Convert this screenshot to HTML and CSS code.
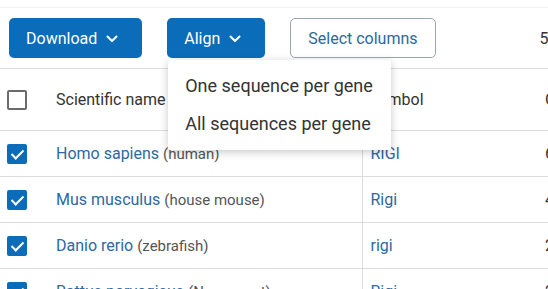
FILE: index.html
```html
<!DOCTYPE html>
<html lang="en">
<head>
  <meta charset="UTF-8" />
  <meta name="viewport" content="width=device-width, initial-scale=1" />
  <title>Orthologs</title>
  <link rel="stylesheet" href="styles.css">
</head>
<body>
  <div class="page">
    <div class="toolbar">
      <button class="btn btn-primary">Download
        <svg class="chev" width="12" height="8" viewBox="0 0 12 8"><path d="M1.5 1.5 6 6l4.5-4.5" fill="none" stroke="#fff" stroke-width="2" stroke-linecap="round" stroke-linejoin="round"/></svg>
      </button>
      <div class="dropdown">
        <button class="btn btn-primary">Align
          <svg class="chev" width="12" height="8" viewBox="0 0 12 8"><path d="M1.5 1.5 6 6l4.5-4.5" fill="none" stroke="#fff" stroke-width="2" stroke-linecap="round" stroke-linejoin="round"/></svg>
        </button>
        <div class="menu">
          <div class="menu-item">One sequence per gene</div>
          <div class="menu-item">All sequences per gene</div>
        </div>
      </div>
      <button class="btn btn-outline">Select columns</button>
      <span class="count">5 selected</span>
    </div>

    <table class="genes">
      <thead>
        <tr>
          <th class="col-check"><span class="checkbox"></span></th>
          <th class="col-name">Scientific name</th>
          <th class="col-symbol">Symbol</th>
          <th class="col-more">Gene ID</th>
        </tr>
      </thead>
      <tbody>
        <tr>
          <td class="col-check"><span class="checkbox checked"></span></td>
          <td class="col-name"><a href="#">Homo sapiens</a> <span class="common">(human)</span></td>
          <td class="col-symbol"><a href="#">RIGI</a></td>
          <td class="col-more">6</td>
        </tr>
        <tr>
          <td class="col-check"><span class="checkbox checked"></span></td>
          <td class="col-name"><a href="#">Mus musculus</a> <span class="common">(house mouse)</span></td>
          <td class="col-symbol"><a href="#">Rigi</a></td>
          <td class="col-more">4</td>
        </tr>
        <tr>
          <td class="col-check"><span class="checkbox checked"></span></td>
          <td class="col-name"><a href="#">Danio rerio</a> <span class="common">(zebrafish)</span></td>
          <td class="col-symbol"><a href="#">rigi</a></td>
          <td class="col-more">2</td>
        </tr>
        <tr>
          <td class="col-check"><span class="checkbox checked"></span></td>
          <td class="col-name"><a href="#">Rattus norvegicus</a> <span class="common">(Norway rat)</span></td>
          <td class="col-symbol"><a href="#">Rigi</a></td>
          <td class="col-more">2</td>
        </tr>
      </tbody>
    </table>
  </div>
</body>
</html>
```

FILE: styles.css
```css
* {
  margin: 0;
  padding: 0;
  box-sizing: border-box;
}

body {
  font-family: Roboto, "Liberation Sans", sans-serif;
  background-color: #fff;
  color: #333;
  width: 548px;
  height: 289px;
  overflow: hidden;
}

.page {
  width: 760px;
  border-top: 1px solid #f1f1f1;
  margin-top: 7px;
}

.toolbar {
  display: flex;
  align-items: center;
  height: 60px;
  padding: 0 0 0 9px;
}

.btn {
  height: 40px;
  border-radius: 5px;
  font-family: inherit;
  font-size: 16px;
  cursor: pointer;
  display: flex;
  align-items: center;
}

.btn-primary {
  background-color: #0b6db9;
  color: #fff;
  border: none;
  padding: 0 24px 0 17px;
  gap: 9px;
}

.btn-primary + .dropdown,
.dropdown + .btn {
  margin-left: 25px;
}

.chev {
  margin-top: 1px;
}

.btn-outline {
  background-color: #fff;
  color: #2b68a0;
  border: 1px solid #98a6b3;
  padding: 0 17px;
}

.dropdown {
  position: relative;
}

.menu {
  position: absolute;
  left: 1px;
  top: 42px;
  width: 223px;
  background-color: #fff;
  box-shadow: 0 2px 8px rgba(0, 0, 0, 0.22);
  border-radius: 2px;
  padding: 7px 0;
  z-index: 2;
}

.menu-item {
  padding: 0 17px;
  height: 38px;
  line-height: 38px;
  font-size: 18px;
  color: #333;
  white-space: nowrap;
}

.count {
  margin-left: 104px;
  font-size: 16px;
  color: #333;
}

.genes {
  border-collapse: collapse;
  width: 760px;
}

.genes tr {
  border-top: 1px solid #dcdcdc;
}

.genes th {
  height: 62px;
  font-weight: normal;
  text-align: left;
  font-size: 16px;
  color: #333;
}

.genes td {
  height: 46px;
  font-size: 16px;
}

.col-check {
  width: 56px;
  padding-left: 7px;
}

.col-name {
  width: 306px;
}

.col-symbol {
  width: 183px;
  border-left: 1px solid #dcdcdc;
  padding-left: 8px;
}

.col-more {
  color: #333;
}

.genes a {
  color: #2d69a2;
  text-decoration: none;
}

.common {
  font-size: 15px;
  color: #555;
}

.checkbox {
  display: block;
  width: 20px;
  height: 20px;
  border: 2px solid #6b6b6b;
  border-radius: 2px;
  position: relative;
}

.checkbox.checked {
  background-color: #0b6db9;
  border-color: #0b6db9;
}

.checkbox.checked::after {
  content: "";
  position: absolute;
  left: 5px;
  top: 1px;
  width: 5px;
  height: 10px;
  border: solid #fff;
  border-width: 0 2px 2px 0;
  transform: rotate(45deg);
}
```
